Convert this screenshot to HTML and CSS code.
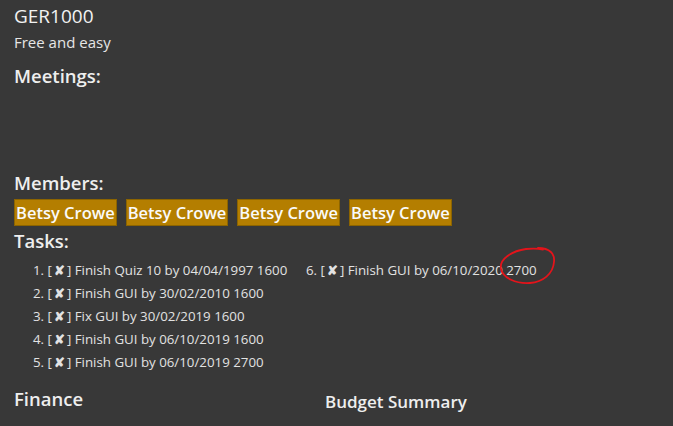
FILE: index.html
```html
<!DOCTYPE html>
<html>
<head>
<meta charset="utf-8">
<link rel="stylesheet" href="styles.css">
</head>
<body>
<div class="page">
  <div class="title">GER1000</div>
  <div class="desc">Free and easy</div>
  <div class="heading meetings">Meetings:</div>
  <div class="meeting-area"></div>
  <div class="heading">Members:</div>
  <div class="chips">
    <span class="chip">Betsy Crowe</span>
    <span class="chip">Betsy Crowe</span>
    <span class="chip">Betsy Crowe</span>
    <span class="chip">Betsy Crowe</span>
  </div>
  <div class="heading tasks-heading">Tasks:</div>
  <ol class="tasks">
    <li>1. [<b>✘</b>] Finish Quiz 10 by 04/04/1997 1600</li>
    <li>2. [<b>✘</b>] Finish GUI by 30/02/2010 1600</li>
    <li>3. [<b>✘</b>] Fix GUI by 30/02/2019 1600</li>
    <li>4. [<b>✘</b>] Finish GUI by 06/10/2019 1600</li>
    <li>5. [<b>✘</b>] Finish GUI by 06/10/2019 2700</li>
    <li>6. [<b>✘</b>] Finish GUI by 06/10/2020 <span class="circled">2700<svg class="ring" width="60" height="42" viewBox="0 0 60 42"><path d="M40 3 C52 3 57 9 56 17 C55 29 45 37 32 38 C18 39 5 33 3 24 C1 14 14 6 28 4 C33 3.4 38 3 45 4.5" fill="none" stroke="#e3141b" stroke-width="1.8" stroke-linecap="round"/></svg></span></li>
  </ol>
  <div class="bottom">
    <div class="finance">Finance</div>
    <div class="budget">Budget Summary</div>
  </div>
</div>
</body>
</html>
```
FILE: styles.css
```css
html, body {
  margin: 0;
  padding: 0;
  background: #383838;
  overflow: hidden;
}
.page {
  width: 673px;
  height: 426px;
  padding: 4px 14px 0 14px;
  box-sizing: border-box;
  font-family: "Open Sans", "Noto Sans", sans-serif;
  color: #f0f0f0;
}
.title {
  font-size: 19px;
  line-height: 24px;
  color: #f2f2f2;
}
.desc {
  font-size: 15px;
  line-height: 20px;
  color: #e6e6e6;
  margin-top: 4px;
}
.heading {
  font-size: 18.5px;
  font-weight: 600;
  line-height: 24px;
  color: #eeeeee;
}
.meetings {
  margin-top: 12px;
}
.meeting-area {
  height: 83px;
}
.chips {
  display: flex;
  gap: 9px;
  margin-top: 4px;
}
.chip {
  background: #b47e00;
  border: 1px solid #8c6400;
  color: #fafafa;
  font-size: 16.5px;
  font-weight: 600;
  line-height: 25px;
  padding: 0 1px;
}
.tasks-heading {
  margin-top: 3px;
}
.tasks {
  list-style: none;
  margin: 6px 0 0 0;
  padding: 0 0 0 19px;
  display: grid;
  grid-template-rows: repeat(5, 23px);
  grid-template-columns: 273px max-content;
  grid-auto-flow: column;
  font-size: 13.3px;
  color: #e2e2e2;
}
.tasks li {
  line-height: 23px;
  white-space: nowrap;
}
.tasks b {
  font-weight: 700;
  padding: 0 2px;
}
.circled {
  position: relative;
}
.ring {
  position: absolute;
  left: -8px;
  top: -16px;
}
.bottom {
  display: flex;
  margin-top: 13px;
}
.finance {
  width: 311px;
  font-size: 18.5px;
  line-height: 24px;
  font-weight: 600;
  color: #eeeeee;
}
.budget {
  font-size: 17px;
  line-height: 24px;
  font-weight: 600;
  color: #eeeeee;
  margin-top: 3px;
}
```
